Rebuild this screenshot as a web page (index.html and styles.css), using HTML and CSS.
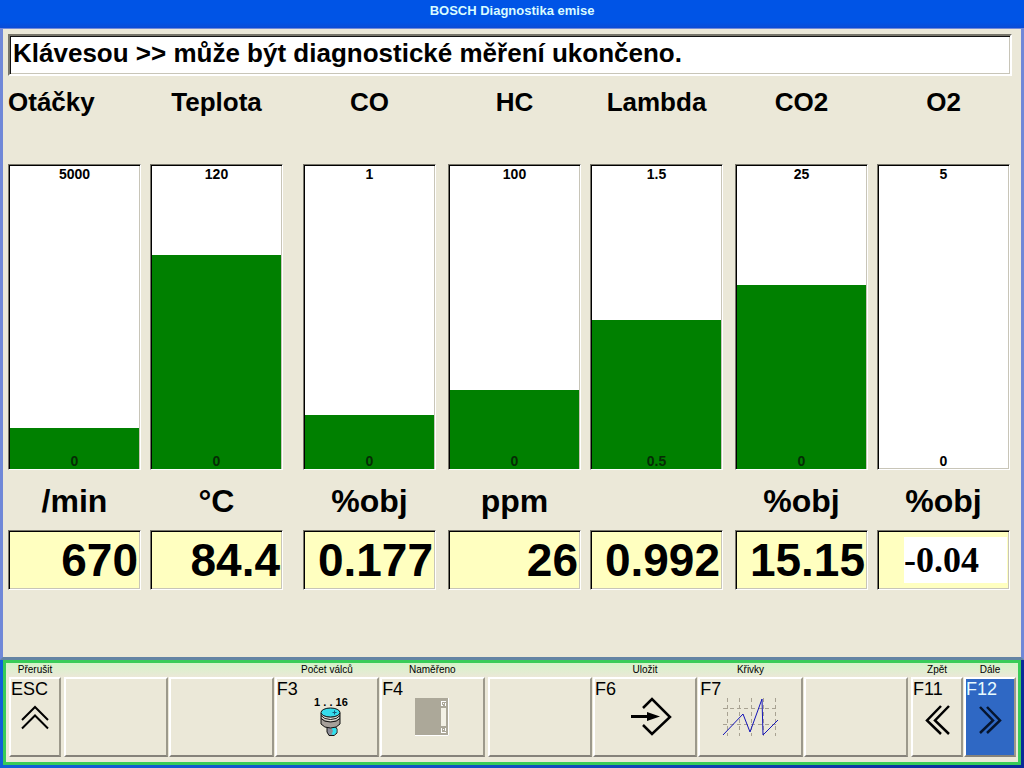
FILE: index.html
```html
<!DOCTYPE html>
<html lang="cs">
<head>
<meta charset="utf-8">
<title>BOSCH Diagnostika emise</title>
<link rel="stylesheet" href="styles.css">
</head>
<body>
<header class="titlebar"><h1>BOSCH Diagnostika emise</h1></header>
<main class="panel">
  <p class="message">Klávesou &gt;&gt; může být diagnostické měření ukončeno.</p>
  <div class="gauges">
    <section class="gauge gauge-first">
      <h2 class="name">Otáčky</h2>
      <div class="tube"><div class="fill" style="height:13.4%"></div><span class="max">5000</span><span class="min">0</span></div>
      <div class="unit">/min</div>
      <output class="value">670</output>
    </section>
    <section class="gauge gap-s">
      <h2 class="name">Teplota</h2>
      <div class="tube"><div class="fill" style="height:70.4%"></div><span class="max">120</span><span class="min">0</span></div>
      <div class="unit">°C</div>
      <output class="value">84.4</output>
    </section>
    <section class="gauge gap-l">
      <h2 class="name">CO</h2>
      <div class="tube"><div class="fill" style="height:17.7%"></div><span class="max">1</span><span class="min">0</span></div>
      <div class="unit">%obj</div>
      <output class="value">0.177</output>
    </section>
    <section class="gauge gap-m">
      <h2 class="name">HC</h2>
      <div class="tube"><div class="fill" style="height:26%"></div><span class="max">100</span><span class="min">0</span></div>
      <div class="unit">ppm</div>
      <output class="value">26</output>
    </section>
    <section class="gauge gap-s">
      <h2 class="name">Lambda</h2>
      <div class="tube"><div class="fill" style="height:49%"></div><span class="max">1.5</span><span class="min">0.5</span></div>
      <div class="unit"></div>
      <output class="value">0.992</output>
    </section>
    <section class="gauge gap-m">
      <h2 class="name">CO2</h2>
      <div class="tube"><div class="fill" style="height:60.6%"></div><span class="max">25</span><span class="min">0</span></div>
      <div class="unit">%obj</div>
      <output class="value">15.15</output>
    </section>
    <section class="gauge gap-s">
      <h2 class="name">O2</h2>
      <div class="tube"><div class="fill" style="height:0%"></div><span class="max">5</span><span class="min">0</span></div>
      <div class="unit">%obj</div>
      <output class="value value-patched"><span class="patch">-0.04</span></output>
    </section>
  </div>
</main>
<footer class="keybar">
  <div class="keys">
    <div class="group one">
      <div class="key"><label for="esc">Přerušit</label>
        <button id="esc" type="button"><span class="code">ESC</span>
          <svg class="icon" width="30" height="44" viewBox="0 0 30 44" fill="none" stroke="#000" stroke-width="2"><path d="M2 25L15 12L28 25M2 33.500L15 20.500L28 33.500"/></svg>
        </button></div>
    </div>
    <div class="group four">
      <div class="key"><span class="cap"></span><button type="button" aria-label="F1"></button></div>
      <div class="key"><span class="cap"></span><button type="button" aria-label="F2"></button></div>
      <div class="key"><label for="f3">Počet válců</label>
        <button id="f3" type="button"><span class="code">F3</span>
          <span class="icon piston"><span class="range">1 . . 16</span>
          <svg width="24" height="30" viewBox="0 0 24 30" stroke="#111" stroke-width="1">
            <path d="M8 19V25L10 28.500H15L18 26V22L16 19Z" fill="#8c8c98"/>
            <path d="M12 20H15.500L17.500 22V25.500L15 28L12.500 27.500L14 24Z" fill="#2fe0ee" stroke="none"/>
            <path d="M2 6V17Q5 21 11.500 21Q18 21 21 17V6" fill="#a6a09a"/>
            <path d="M3 7.500Q6 11 11.500 11Q17 11 20 7.500V11Q17 14 11.500 14Q6 14 3 11Z" fill="#e6e4dc" stroke="none"/>
            <path d="M2 8.500Q5 12.500 11.500 12.500Q18 12.500 21 8.500M2 11.500Q5 15 11.500 15Q18 15 21 11.500" fill="none"/>
            <ellipse cx="11.500" cy="5.500" rx="9.500" ry="4.500" fill="#35dcec"/>
            <path d="M13.500 5.500H17.500M15.500 3.500V7.500" stroke="#145a7a"/>
          </svg></span>
        </button></div>
      <div class="key"><label for="f4">Naměřeno</label>
        <button id="f4" type="button"><span class="code">F4</span>
          <svg class="icon" width="44" height="44" viewBox="0 0 44 44">
            <rect x="5" y="3" width="34" height="38" fill="#aca899"/>
            <path d="M5 40.500H38.500V3" fill="none" stroke="#fff"/>
            <rect x="31" y="13" width="5" height="18" fill="#f4f2e6"/>
            <path d="M31 6.500H36M31.500 6V11M35.500 8V11M31 10.500H33M31.500 33V38M31 37.500H36M35.500 33V36M33 34.500H34M33 8.500H34" fill="none" stroke="#fff"/>
          </svg>
        </button></div>
    </div>
    <div class="group four">
      <div class="key"><span class="cap"></span><button type="button" aria-label="F5"></button></div>
      <div class="key"><label for="f6">Uložit</label>
        <button id="f6" type="button"><span class="code">F6</span>
          <svg class="icon" width="60" height="44" viewBox="0 0 60 44">
            <path d="M28 13L37 4L55 22L37 39L28 30" fill="none" stroke="#000" stroke-width="2.500"/>
            <path d="M16 20H32V17L45 21.500L32 26V23H16Z"/>
          </svg>
        </button></div>
      <div class="key"><label for="f7">Křivky</label>
        <button id="f7" type="button"><span class="code">F7</span>
          <svg class="icon" width="60" height="44" viewBox="0 0 60 44" fill="none">
            <path d="M6.500 3V41M18.500 3V41M30.500 3V41M42.500 3V41M54.500 3V41M2 13.500H58M2 29.500H58" stroke="#a8a292" stroke-dasharray="4 3"/>
            <path d="M2 40L22 19L29 37L41 4L42 40L57 25" stroke="#1414b8"/>
          </svg>
        </button></div>
      <div class="key"><span class="cap"></span><button type="button" aria-label="F8"></button></div>
    </div>
    <div class="group two">
      <div class="key"><label for="f11">Zpět</label>
        <button id="f11" type="button"><span class="code">F11</span>
          <svg class="icon" width="30" height="44" viewBox="0 0 30 44" fill="none" stroke="#000" stroke-width="2.500"><path d="M19 11L5 25.500L19 39M27 11L13 25.500L27 39"/></svg>
        </button></div>
      <div class="key"><label for="f12">Dále</label>
        <button id="f12" class="active" type="button"><span class="code">F12</span>
          <svg class="icon" width="30" height="44" viewBox="0 0 30 44" fill="none" stroke="#06152e" stroke-width="2.500"><path d="M5 12L18 25.500L5 38M12 12L25 25.500L12 38"/></svg>
        </button></div>
    </div>
  </div>
</footer>
</body>
</html>
```
FILE: styles.css
```css
* { box-sizing: border-box; }

body {
  margin: 0;
  min-height: 100vh;
  display: flex;
  flex-direction: column;
  background: #0a4fd0;
  color: #000;
  font-family: "Liberation Sans", Arial, sans-serif;
}

.titlebar {
  height: 28px;
  background: linear-gradient(#0054e6 0 80%, #0a4bd6);
  text-align: center;
}

.titlebar h1 {
  margin: 0;
  font-size: 13px;
  line-height: 22px;
  color: #d8fbff;
}

.panel {
  flex: 1;
  display: flex;
  flex-direction: column;
  padding: 5px 9px 67px 5px;
  background: #ebe8d8;
  border: 3px solid #7088d8;
  border-width: 1px 3px 3px;
  border-bottom-color: #6484a4;
}

.message {
  margin: 0;
  padding: 0 3px 3px;
  border: 2px solid;
  border-color: #77756a #fff #fff #77756a;
  box-shadow: inset 1px 1px #111, inset -1px -1px #c8c5b8;
  background: #fff;
  font-size: 26px;
  font-weight: bold;
  line-height: 35px;
  white-space: nowrap;
}

.gauges { flex: 1; display: flex; padding-right: 2px; }

.gauge {
  flex: 1 1 0;
  min-width: 0;
  display: flex;
  flex-direction: column;
  font-weight: bold;
}

.gap-s { margin-left: 9px; }
.gap-m { margin-left: 12px; }
.gap-l { margin-left: 20px; }

.name {
  margin: 0;
  height: 88px;
  padding-top: 10px;
  font-size: 26px;
  line-height: 32px;
  text-align: center;
}

.gauge-first .name { text-align: left; }

.tube, .value {
  border: 1px solid;
  border-color: #77756a #fff #fff #77756a;
  box-shadow: inset 1px 1px #000, inset -1px -1px #c8c5b8;
}

.tube {
  position: relative;
  flex: 1;
  background: #fff;
  font-size: 14px;
  line-height: 16px;
  text-align: center;
}

.fill {
  position: absolute;
  left: 1px;
  right: 1px;
  bottom: 0;
  background: #008000;
}

.max, .min { position: absolute; left: 0; right: 0; }
.max { top: 1px; }
.min { bottom: 0; }
.fill:not([style="height:0%"]) ~ .min { color: #062c06; }

.unit {
  height: 60px;
  font-size: 32px;
  line-height: 62px;
  text-align: center;
}

.value {
  display: block;
  height: 60px;
  padding-right: 2px;
  background: #ffffc0;
  font-size: 46px;
  line-height: 58px;
  text-align: right;
}

.value-patched { padding: 6px 2px 6px 26px; }

.patch {
  display: block;
  background: #fff;
  font-family: "Liberation Serif", "Times New Roman", serif;
  font-size: 36px;
  line-height: 46px;
  text-align: left;
}

.keybar {
  padding: 0 3px 3px;
  background: linear-gradient(90deg, #1060d8, #1050c0 50%, #082c98);
}

.keys {
  display: flex;
  gap: 3px;
  padding: 1px 2px 5px 3px;
  border: 3px solid #38cc58;
  background: linear-gradient(#d4f4c8, #ebe8d8 14px);
}

.group { display: flex; gap: 1px; min-width: 0; }
.one { flex: 52 1 0; }
.two { flex: 105 1 0; }
.four { flex: 421 1 0; }

.key { flex: 1 1 0; min-width: 0; display: flex; flex-direction: column; }

.key label, .cap {
  height: 13px;
  font-size: 10px;
  line-height: 12px;
  text-align: center;
  white-space: nowrap;
}

.key button {
  height: 80px;
  padding: 0;
  display: grid;
  border: 2px solid;
  border-color: #fff #9c998b #85827a #fff;
  background: #ebe8d8;
  color: #000;
  font: 18px/20px "Liberation Sans", Arial, sans-serif;
}

.key .active { background: #2f68c4; color: #e8fbff; }

.code { grid-area: 1 / 1; place-self: start; }
.icon { grid-area: 1 / 1; place-self: center; }

.piston { display: flex; flex-direction: column; align-items: center; padding-left: 8px; }
.range { font-size: 11px; font-weight: bold; line-height: 10px; }
```
